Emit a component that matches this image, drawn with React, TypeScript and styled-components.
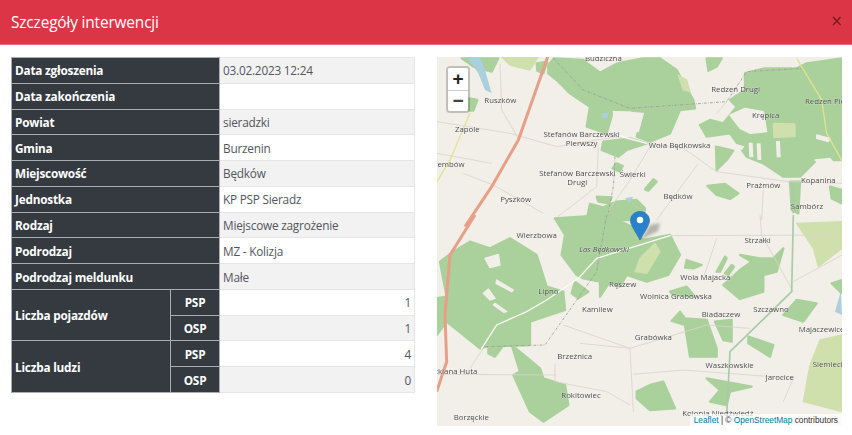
import React from "react";
import styled, { createGlobalStyle } from "styled-components";

const Global = createGlobalStyle`
  html, body { margin: 0; padding: 0; background: #fff; }
  body { font-family: "Open Sans", "Noto Sans", sans-serif; }
`;
const Page = styled.div`width: 852px; height: 435px; overflow: hidden; display: flex; flex-direction: column;`;
const Header = styled.header`
  height: 44px; flex: none; background: #dc3545; border-bottom: 1px solid #e2707c;
  display: flex; align-items: center; justify-content: space-between; padding: 0 11px;
`;
const Title = styled.h5`margin: 0; color: #fff; font-size: 15.4px; font-weight: 500; letter-spacing: -0.15px;`;
const Close = styled.span`color: #000; opacity: 0.5; font-size: 15px; font-weight: 400; line-height: 1; position: relative; top: -1px; right: -2px; font-family: "DejaVu Sans", sans-serif;`;
const Body = styled.main`flex: 1; display: flex; gap: 22px; padding: 12px 10px 9px 11px; align-items: flex-start;`;
const Table = styled.table`
  width: 404px; height: 336px; flex: none; border-collapse: collapse; table-layout: fixed;
  font-size: 11.8px; letter-spacing: -0.22px; color: #52575c;
`;
const Row = styled.tr<{ $striped: boolean }>`background: ${(p) => (p.$striped ? "#f2f2f2" : "#fff")};`;
const Head = styled.th<{ $center?: boolean }>`
  background: #343a40; color: #fff; font-weight: 700; padding: 0 3px; border: 1px solid #a9adb1;
  text-align: ${(p) => (p.$center ? "center" : "left")};
`;
const Cell = styled.td<{ $num?: boolean }>`
  padding: 0 3px; border: 1px solid #e4e6e8; text-align: ${(p) => (p.$num ? "right" : "left")};
`;
const MapBox = styled.section`
  position: relative; width: 405px; height: 369px; flex: none; overflow: hidden; background: #f2efe9;
`;
const MapSvg = styled.svg`display: block; width: 405px; height: 369px; filter: blur(0.4px);`;
const Forest = styled.path`fill: #aad09c; stroke: #aad09c; stroke-width: 7; stroke-linejoin: round;`;
const Clearing = styled.path`fill: #f2efe9; stroke: #f2efe9; stroke-width: 4; stroke-linejoin: round;`;
const Lime = styled.path`fill: #cfe0ad; stroke: #cfe0ad; stroke-width: 4; stroke-linejoin: round;`;
const Water = styled.path`fill: #a9d0dc;`;
const Highway = styled.path`fill: none; stroke: #e89f88; stroke-width: 9;`;
const GreenRoad = styled.path`fill: none; stroke: #a6cba6; stroke-width: 5;`;
const YellowRoad = styled.path`fill: none; stroke: #dfe48e; stroke-width: 4;`;
const WhiteRoad = styled.path`fill: none; stroke: #fbfaf6; stroke-width: 4; stroke-linecap: round;`;
const ThinRoad = styled.path`fill: none; stroke: #d8d3cb; stroke-width: 2.5;`;
const Border = styled.path`fill: none; stroke: #9b9a97; stroke-width: 2.5; stroke-dasharray: 8 4 2 4;`;
const Label = styled.text<{ $italic?: boolean }>`
  font-family: "Open Sans", sans-serif; font-size: 23.5px; fill: #4a4a4a;
  font-style: ${(p) => (p.$italic ? "italic" : "normal")};
  paint-order: stroke; stroke: rgba(255, 255, 255, 0.5); stroke-width: 2px;
`;
const Zoom = styled.div`
  position: absolute; left: 9px; top: 9px; width: 20px; border: 2px solid rgba(0, 0, 0, 0.2);
  border-radius: 4px; background-clip: padding-box; display: flex; flex-direction: column; overflow: hidden;
`;
const ZoomBtn = styled.button`
  width: 20px; height: 21.5px; padding: 0; border: 0; background: #fff; color: #222;
  font: 700 19px/21px "Liberation Sans", sans-serif; display: flex; align-items: center; justify-content: center;
  & + & { border-top: 1px solid #ccc; color: #444; }
`;
const Pin = styled.svg`position: absolute; left: 193px; top: 154px; width: 36px; height: 31px;`;
const PinShadow = styled.path`fill: rgba(70, 70, 60, 0.35); filter: blur(1.5px);`;
const Attribution = styled.div`
  position: absolute; right: 0; bottom: 0; padding: 0 4px; height: 12px;
  background: rgba(255, 255, 255, 0.72); color: #333; font: 8.3px/12px "Liberation Sans", sans-serif; white-space: nowrap;
`;
const Link = styled.span`color: #0078a8;`;

const simple: [string, string][] = [
  ["Data zgłoszenia", "03.02.2023 12:24"],
  ["Data zakończenia", ""],
  ["Powiat", "sieradzki"],
  ["Gmina", "Burzenin"],
  ["Miejscowość", "Będków"],
  ["Jednostka", "KP PSP Sieradz"],
  ["Rodzaj", "Miejscowe zagrożenie"],
  ["Podrodzaj", "MZ - Kolizja"],
  ["Podrodzaj meldunku", "Małe"],
];
const counts: [string, string, string][] = [
  ["Liczba pojazdów", "1", "1"],
  ["Liczba ludzi", "4", "0"],
];

type Place = [string, number, number, ("start" | "middle" | "end")?];
const upper: Place[] = [
  ["Budziczna", 520, 182], ["Ruszków", 211, 308], ["Zapole", 112, 397], ["Stembów", 104, 501, "end"],
  ["Stefanów Barczewski", 455, 410], ["Pierwszy", 455, 439], ["Wola Będkowska", 749, 443],
  ["Redzeń Drugi", 917, 275], ["Redzeń Pierwszy", 1125, 313, "start"], ["Krępica", 1007, 354],
  ["Stefanów Barczewski", 442, 527], ["Drugi", 442, 556], ["Świerki", 608, 530], ["Będków", 744, 597],
  ["Pyszków", 257, 605], ["Prażmów", 1000, 565], ["Kopanina", 1165, 548], ["Sambórz", 1131, 626],
];
const lower: Place[] = [
  ["Wierzbowa", 320, 70], ["Strzałki", 983, 83], ["Ręszew", 578, 215], ["Wola Majacka", 826, 196],
  ["Lipno", 355, 238], ["Wolnica Grabowska", 738, 253], ["Kamilew", 502, 290], ["Biadaczew", 873, 307],
  ["Szczawno", 1023, 290], ["Majaczewice", 1106, 350, "start"], ["Grabówka", 670, 376], ["Brzeźnica", 434, 432],
  ["Waszkowskie", 899, 460], ["Siemiechów", 1148, 457, "start"], ["Jarocice", 1049, 496], ["Rokitowiec", 453, 549],
  ["Borzęckie", 124, 615], ["Kolonia Niedźwiedź", 757, 604, "start"], ["Szklana Huta", 142, 477, "end"],
];

const MapDrawing = () => (
  <MapSvg viewBox="21 171 1215 1107">
    <g>
      <Forest d="M355 195L372 175L460 180L510 218L560 190L640 175L690 175L740 210L790 300L795 325L750 330L720 400L660 425L620 410L640 340L600 330L550 330L530 400L470 380L480 320L420 280L380 240L355 220Z" />
      <Clearing d="M470 168H575L560 186L510 210L475 186Z" />
      <Clearing d="M550 335L640 340L625 395L590 375L555 370Z" />
      <Lime d="M745 225L770 240L780 275L760 270Z" />
      <Forest d="M830 175H875L860 200L835 212Z" />
      <Forest d="M945 220L1000 205L1100 205L1130 190L1236 175V480L1160 480L1110 530L1060 530L1000 490L950 470L900 400L830 410L810 375L840 360L880 370L920 320L900 300L945 270Z" />
      <Clearing d="M900 345L945 325L1000 335L1010 395L960 400L930 385Z" />
      <Lime d="M1030 370L1095 372L1095 410L1032 412Z" />
      <Clearing d="M930 168L1000 200L945 212L925 180Z" />
      <Clearing d="M1040 168H1100L1125 185L1090 200L1040 192Z" />
      <Clearing d="M1155 480L1200 475L1236 520V555L1190 510Z" />
      <Clearing d="M885 425L940 440L935 448L885 433ZM958 430L966 430L968 470L960 470ZM982 432L990 432L992 478L984 478ZM1040 425L1048 425L1050 470L1042 470ZM1160 405L1200 415L1195 425L1160 415Z" />
      <Forest d="M95 175H205L185 215L130 200L110 185Z" />
      <Water d="M110 171H150L165 210L185 280L165 270L145 220Z" />
      <Lime d="M215 171H325L300 210L240 195Z" />
      <Forest d="M320 190L352 185L340 220L322 212Z" />
      <Forest d="M118 295L142 300L130 332L118 332Z" />
      <Forest d="M520 425L600 415L650 430L590 450L565 470L515 450Z" />
      <Forest d="M560 490L578 498L570 515L548 505Z" />
      <Forest d="M858 440L910 452L890 480L860 510Z" />
      <Forest d="M832 558L885 552L925 580L900 597L860 585Z" />
      <Forest d="M645 568L670 538L680 545L655 572Z" />
      <Forest d="M1080 545H1110L1105 640L1085 630Z" />
      <Forest d="M1200 560L1236 570V610L1205 595Z" />
      <Forest d="M470 660L480 612L520 622L560 605L620 600L645 625L640 660Z" />
      <Forest d="M500 590L545 592L535 610L505 605Z" />
      <Water d="M585 595L610 590L600 608Z" />
      <Water d="M515 340L535 340L530 355L518 355Z" />
      <ThinRoad d="M21 365L240 400L380 440L560 410L650 430L760 445L860 515L1075 545L1236 550" />
      <ThinRoad d="M210 190L215 330L265 415" />
      <ThinRoad d="M21 460L185 490M100 520L190 555L340 640M505 440L500 560L370 660M660 440L600 540L530 640M805 490L680 660M860 340L890 305M1000 570L995 660" />
      <Border d="M370 175L460 270L600 325L890 305L950 215L1120 205" />
      <Border d="M555 470L550 560L530 660" />
      <WhiteRoad d="M560 405L650 430" />
      <Highway d="M355 165L265 420L185 560L105 680" />
      <YellowRoad d="M120 340L60 480L21 545" />
      <YellowRoad d="M1100 175L1175 300L1190 400L1240 490" />
      <GreenRoad d="M1090 550V640" />
      {upper.map(([t, x, y, a]) => (
        <Label key={t + y} x={x} y={y} textAnchor={a ?? "middle"}>{t}</Label>
      ))}
    </g>
    <g transform="translate(0 645)">
      <Forest d="M375 10L530 0L605 35L640 75L720 60L750 120L715 180L650 200L590 180L570 215L540 200L510 245L510 200L460 190L440 180L395 120L405 60Z" />
      <Lime d="M675 85L690 110L650 175L615 170L630 130Z" />
      <Forest d="M20 360V250L50 245L30 140L70 110L120 80L180 100L240 70L320 120L350 215L400 230L405 285L300 320L300 390L170 395L150 400L50 320Z" />
      <Clearing d="M160 235L175 222L195 250L180 255Z" />
      <Clearing d="M165 130L205 118L210 150L180 158Z" />
      <Clearing d="M195 265L230 290L222 292L190 270Z" />
      <Clearing d="M200 195L250 225L245 230L198 205Z" />
      <Forest d="M245 390L330 460L340 490L405 510L415 570L340 620L300 590L250 480L270 470Z" />
      <Forest d="M175 395L220 392L195 425L175 415Z" />
      <Forest d="M435 200L475 230L445 250L425 235Z" />
      <Forest d="M620 530L660 510L700 500L735 580L660 585L620 550Z" />
      <Forest d="M750 290L765 310L830 315L860 400L860 425L780 425L765 330L725 318Z" />
      <Forest d="M855 320L905 315L905 380L880 375Z" />
      <Forest d="M955 365L1030 390L1020 425L955 385Z" />
      <Forest d="M830 490L965 515L900 530L890 570L840 560L870 525Z" />
      <Forest d="M880 210L930 165L965 140L930 120L990 130L1030 130L1060 100L1040 170L1000 180L1000 230L930 252Z" />
      <Forest d="M770 135L815 150L790 160L765 158Z" />
      <Forest d="M860 170L885 125L890 130L870 170ZM885 175L905 150L912 155L895 180Z" />
      <Forest d="M1100 255L1160 265L1120 320L1060 300Z" />
      <Forest d="M720 230L770 215L795 245L730 240Z" />
      <Forest d="M1205 205L1236 195V235Z" />
      <Lime d="M1236 360L1170 375L1140 450L1120 560L1236 590Z" />
      <Lime d="M1100 25L1236 20V100L1165 155L1150 100Z" />
      <Water d="M1232 230L1236 300L1215 290Z" />
      <ThinRoad d="M720 62L1236 60M860 70L820 190M990 0L995 60L1090 230M1236 120L1090 200" />
      <ThinRoad d="M400 330L600 400L830 330L960 340M450 385L600 400L610 590M610 478L760 465L1090 490M375 445L375 500L530 530L600 570M21 478L380 480M160 400L120 460M1090 490L1060 560" />
      <Border d="M530 0L500 170L345 390L160 395" />
      <WhiteRoad d="M720 62L500 130L445 190L350 255L290 290L200 330L155 400" />
      <GreenRoad d="M1090 0L1085 230L900 410L890 600" />
      <Highway d="M135 0L60 120L45 300L50 440L20 530" />
      <Label x={522} y={112} textAnchor="middle" $italic>Las Będkowski</Label>
      {lower.map(([t, x, y, a]) => (
        <Label key={t} x={x} y={y} textAnchor={a ?? "middle"}>{t}</Label>
      ))}
    </g>
  </MapSvg>
);

export default function App() {
  let stripe = true;
  const rows = simple.map(([h, v]) => {
    const r = (
      <Row key={h} $striped={stripe}>
        <Head colSpan={2}>{h}</Head>
        <Cell>{v}</Cell>
      </Row>
    );
    stripe = !stripe;
    return r;
  });
  return (
    <Page>
      <Global />
      <Header>
        <Title>Szczegóły interwencji</Title>
        <Close>×</Close>
      </Header>
      <Body>
        <Table>
          <colgroup>
            <col style={{ width: 159 }} />
            <col style={{ width: 49 }} />
            <col />
          </colgroup>
          <tbody>
            {rows}
            {counts.map(([h, a, b]) => (
              <React.Fragment key={h}>
                <Row $striped={false}>
                  <Head rowSpan={2}>{h}</Head>
                  <Head $center>PSP</Head>
                  <Cell $num>{a}</Cell>
                </Row>
                <Row $striped>
                  <Head $center>OSP</Head>
                  <Cell $num>{b}</Cell>
                </Row>
              </React.Fragment>
            ))}
          </tbody>
        </Table>
        <MapBox>
          <MapDrawing />
          <Zoom>
            <ZoomBtn>+</ZoomBtn>
            <ZoomBtn>−</ZoomBtn>
          </Zoom>
          <Pin viewBox="0 0 36 31">
            <PinShadow d="M10 29L20 14L30 12L28 20Z" />
            <path d="M10 0.5C4.6 0.5 0.5 4.6 0.5 9.6C0.5 14.5 6.5 22 10 29C13.5 22 19.5 14.5 19.5 9.6C19.5 4.6 15.4 0.5 10 0.5Z" fill="#2a81cb" stroke="#2a6ea8" strokeWidth="0.7" />
            <circle cx="10" cy="9" r="3.2" fill="#fff" />
          </Pin>
          <Attribution>
            <Link>Leaflet</Link> | © <Link>OpenStreetMap</Link> contributors
          </Attribution>
        </MapBox>
      </Body>
    </Page>
  );
}
